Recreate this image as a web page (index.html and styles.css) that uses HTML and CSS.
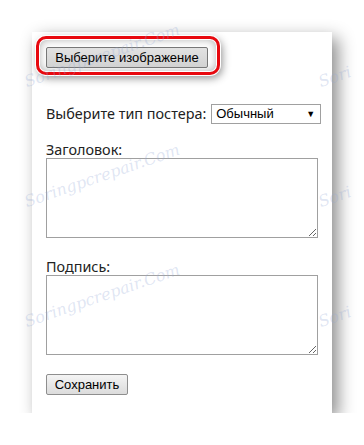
FILE: index.html
```html
<!DOCTYPE html>
<html lang="ru">
<head>
  <meta charset="UTF-8">
  <title>Постер</title>
  <link rel="stylesheet" href="styles.css">
</head>
<body>
  <div class="card">
    <div class="upload-row">
      <span class="highlight">
        <button class="btn btn-pick">Выберите изображение</button>
      </span>
    </div>

    <div class="type-row">
      <label for="posterType">Выберите тип постера:</label>
      <span class="select-wrap">
        <select id="posterType">
          <option>Обычный</option>
        </select>
      </span>
    </div>

    <div class="field">
      <label for="title">Заголовок:</label>
      <textarea id="title"></textarea>
    </div>

    <div class="field">
      <label for="caption">Подпись:</label>
      <textarea id="caption"></textarea>
    </div>

    <button class="btn btn-save">Сохранить</button>
  </div>

  <div class="watermarks">
    <span class="wm wm-1">Soringpcrepair.Com</span>
    <span class="wm wm-2">Soringpcrepair.Com</span>
    <span class="wm wm-3">Soringpcrepair.Com</span>
    <span class="wm wm-r1">Sori</span>
    <span class="wm wm-r2">Sori</span>
    <span class="wm wm-r3">Sori</span>
  </div>
</body>
</html>
```

FILE: styles.css
```css
body {
  margin: 0;
  background: #fff;
  font-family: "Noto Sans", "Open Sans", Arial, sans-serif;
  color: #222;
  overflow: hidden;
}
.card {
  margin: 32px 0 0 32px;
  width: 300px;
  height: 381px;
  box-sizing: border-box;
  padding: 13px 14px;
  background: #fff;
  box-shadow: 6px 6px 16px rgba(0,0,0,0.45);
}
.upload-row {
  height: 21px;
}
.highlight {
  position: relative;
  display: inline-block;
}
.highlight::before {
  content: "";
  position: absolute;
  top: -9px;
  left: -10px;
  right: -12px;
  bottom: -7px;
  border: 3px solid #e8090f;
  border-radius: 10px;
  box-shadow: 0 0 0 1px #fff, inset 0 0 0 1px #fff, inset 0 0 10px rgba(0,0,0,0.35), 2px 3px 8px rgba(0,0,0,0.45);
}
.btn {
  position: relative;
  font-family: "Liberation Sans", Arial, sans-serif;
  font-size: 13px;
  color: #000;
  height: 21px;
  padding: 0 6px;
  border: 1px solid #8e8e8e;
  border-radius: 2px;
  background: linear-gradient(#f4f4f4, #dcdcdc);
}
.btn-pick {
  width: 162px;
  background: linear-gradient(#e2e2e2, #d2d2d2);
  border-color: #777;
}
.type-row {
  margin-top: 37px;
  display: flex;
  align-items: center;
  gap: 5px;
  font-size: 14.4px;
  white-space: nowrap;
}
.select-wrap {
  position: relative;
  display: inline-block;
}
.select-wrap::after {
  content: "▼";
  position: absolute;
  right: 6px;
  top: 4px;
  font-size: 9px;
  color: #000;
  pointer-events: none;
}
.type-row select {
  appearance: none;
  width: 110px;
  height: 20px;
  font-family: "Liberation Sans", Arial, sans-serif;
  font-size: 13px;
  color: #000;
  border: 1px solid #a0a0a0;
  border-radius: 0;
  background: #fff;
  padding: 0 4px;
}
.field {
  margin-top: 20px;
  font-size: 14.4px;
}
.type-row + .field {
  margin-top: 17px;
}
.field label {
  display: block;
  line-height: 17px;
}
.field textarea {
  display: block;
  width: 272px;
  height: 80px;
  box-sizing: border-box;
  border: 1px solid #a0a0a0;
  margin: 0;
  resize: both;
}
.btn-save {
  margin-top: 19px;
  width: 82px;
}
.watermarks {
  position: absolute;
  inset: 0;
  pointer-events: none;
}
.wm {
  position: absolute;
  font-family: "DejaVu Serif", serif;
  font-style: italic;
  font-size: 16px;
  color: rgba(150, 170, 215, 0.3);
  transform: rotate(-19deg);
  transform-origin: left bottom;
  white-space: nowrap;
}
.wm-1 { left: 28px; top: 72px; }
.wm-2 { left: 28px; top: 192px; }
.wm-3 { left: 28px; top: 312px; }
.wm-r1 { left: 322px; top: 72px; }
.wm-r2 { left: 322px; top: 192px; }
.wm-r3 { left: 322px; top: 312px; }
```
